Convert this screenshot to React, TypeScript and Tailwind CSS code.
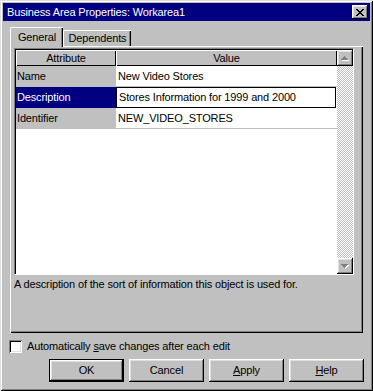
const raised =
  "shadow-[inset_-1px_-1px_0_#000,inset_1px_1px_0_#fff,inset_-2px_-2px_0_#808080,inset_2px_2px_0_#dfdfdf]";

function UpArrow() {
  const d = "M3 0h1v1H3z M2 1h3v1H2z M1 2h5v1H1z M0 3h7v1H0z";
  return (
    <svg width="8" height="5" viewBox="0 0 8 5" shapeRendering="crispEdges">
      <path d={d} fill="#fff" transform="translate(1,1)" />
      <path d={d} fill="#808080" />
    </svg>
  );
}

function DownArrow() {
  const d = "M0 0h7v1H0z M1 1h5v1H1z M2 2h3v1H2z M3 3h1v1H3z";
  return (
    <svg width="8" height="5" viewBox="0 0 8 5" shapeRendering="crispEdges">
      <path d={d} fill="#fff" transform="translate(1,1)" />
      <path d={d} fill="#808080" />
    </svg>
  );
}

function Row({
  attr,
  value,
  selected,
}: {
  attr: string;
  value: string;
  selected?: boolean;
}) {
  return (
    <div className="h-[21px] flex">
      <div
        className={
          selected
            ? "w-[100px] bg-[#000080] text-white flex items-center pl-[1px]"
            : "w-[100px] bg-[#c0c0c0] flex items-center pl-[1px]"
        }
      >
        {attr}
      </div>
      {selected ? (
        <div className="flex-1 bg-white border border-black flex items-center pl-[2px] mr-[1px]">
          {value}
        </div>
      ) : (
        <div className="flex-1 bg-white border-b border-[#c0c0c0] flex items-center pl-[2px]">
          {value}
        </div>
      )}
    </div>
  );
}

export default function App() {
  return (
    <div className="w-[373px] h-[391px] bg-[#c0c0c0] p-[3px] flex flex-col font-['Liberation_Sans',Arial,sans-serif] text-[11px] leading-[13px] tracking-[-0.15px] text-black shadow-[inset_1px_1px_0_#dfdfdf,inset_-1px_-1px_0_#000,inset_2px_2px_0_#fff,inset_-2px_-2px_0_#808080]">
      {/* Title bar */}
      <div className="h-[18px] bg-[#000080] flex items-center pl-[4px] pr-[2px] text-white">
        <span className="flex-1">Business Area Properties: Workarea1</span>
        <div className={"w-[16px] h-[14px] bg-[#c0c0c0] flex items-center justify-center " + raised}>
          <svg width="8" height="7" viewBox="0 0 8 7" shapeRendering="crispEdges">
            <path
              d="M0 0h2v1H0z M6 0h2v1H6z M1 1h2v1H1z M5 1h2v1H5z M2 2h4v1H2z M3 3h2v1H3z M2 4h4v1H2z M1 5h2v1H1z M5 5h2v1H5z M0 6h2v1H0z M6 6h2v1H6z"
              fill="#000"
            />
          </svg>
        </div>
      </div>

      {/* Tabs */}
      <div className="mt-[6px] ml-[7px] h-[20px] flex items-end">
        <div className="relative z-10 w-[53px] h-[20px] bg-[#c0c0c0] border-t border-l border-white rounded-tl-[2px] shadow-[inset_-1px_0_0_#000,inset_-2px_0_0_#808080] flex justify-center pt-[3px]">
          General
        </div>
        <div className="w-[68px] h-[16px] mb-[1px] bg-[#c0c0c0] border-t border-l border-white rounded-tl-[2px] shadow-[inset_-1px_0_0_#000,inset_-2px_0_0_#808080] flex justify-center pt-[1px]">
          Dependents
        </div>
      </div>

      {/* Panel */}
      <div className="-mt-[1px] ml-[7px] w-[353px] h-[287px] border-t border-l border-white shadow-[inset_-1px_-1px_0_#000,inset_-2px_-2px_0_#808080] pt-[1px] pl-[3px] flex flex-col">
        <div className="w-[340px] h-[227px] border border-t-[#808080] border-l-[#808080] border-r-white border-b-white flex">
          <div className="flex-1 border-t border-l border-black flex">
            <div className="flex-1 bg-white flex flex-col">
              <div className="h-[16px] flex bg-[#c0c0c0]">
                <div className="w-[100px] flex items-center justify-center shadow-[inset_1px_1px_0_#fff,inset_-1px_-1px_0_#000]">
                  Attribute
                </div>
                <div className="flex-1 flex items-center justify-center shadow-[inset_1px_1px_0_#fff,inset_-1px_-1px_0_#000]">
                  Value
                </div>
              </div>
              <Row attr="Name" value="New Video Stores" />
              <Row attr="Description" value="Stores Information for 1999 and 2000" selected />
              <Row attr="Identifier" value="NEW_VIDEO_STORES" />
            </div>
            <div className="w-[16px] flex flex-col">
              <div className={"h-[16px] bg-[#c0c0c0] flex items-center justify-center " + raised}>
                <UpArrow />
              </div>
              <div className="flex-1 bg-[conic-gradient(#ffffff_25%,#c0c0c0_0_50%,#ffffff_0_75%,#c0c0c0_0)] bg-[length:2px_2px]" />
              <div className={"h-[16px] bg-[#c0c0c0] flex items-center justify-center " + raised}>
                <DownArrow />
              </div>
            </div>
          </div>
        </div>
        <div className="mt-[3px]">A description of the sort of information this object is used for.</div>
      </div>

      {/* Checkbox */}
      <div className="mt-[7px] ml-[6px] h-[13px] flex items-center">
        <div className="w-[13px] h-[13px] bg-white shadow-[inset_1px_1px_0_#808080,inset_-1px_-1px_0_#fff,inset_2px_2px_0_#000,inset_-2px_-2px_0_#dfdfdf]" />
        <span className="ml-[5px]">
          Automatically <span className="underline underline-offset-[1px]">s</span>ave changes after each edit
        </span>
      </div>

      {/* Buttons */}
      <div className="mt-[6px] ml-[46px] flex gap-[5px]">
        <div className="w-[75px] h-[23px] border border-black bg-[#c0c0c0] flex items-center justify-center shadow-[inset_-1px_-1px_0_#000,inset_1px_1px_0_#fff,inset_-2px_-2px_0_#808080,inset_2px_2px_0_#dfdfdf]">
          OK
        </div>
        <div className={"w-[75px] h-[23px] bg-[#c0c0c0] flex items-center justify-center " + raised}>
          Cancel
        </div>
        <div className={"w-[75px] h-[23px] bg-[#c0c0c0] flex items-center justify-center " + raised}>
          <span>
            <span className="underline underline-offset-[1px]">A</span>pply
          </span>
        </div>
        <div className={"w-[75px] h-[23px] bg-[#c0c0c0] flex items-center justify-center " + raised}>
          <span>
            <span className="underline underline-offset-[1px]">H</span>elp
          </span>
        </div>
      </div>
    </div>
  );
}
